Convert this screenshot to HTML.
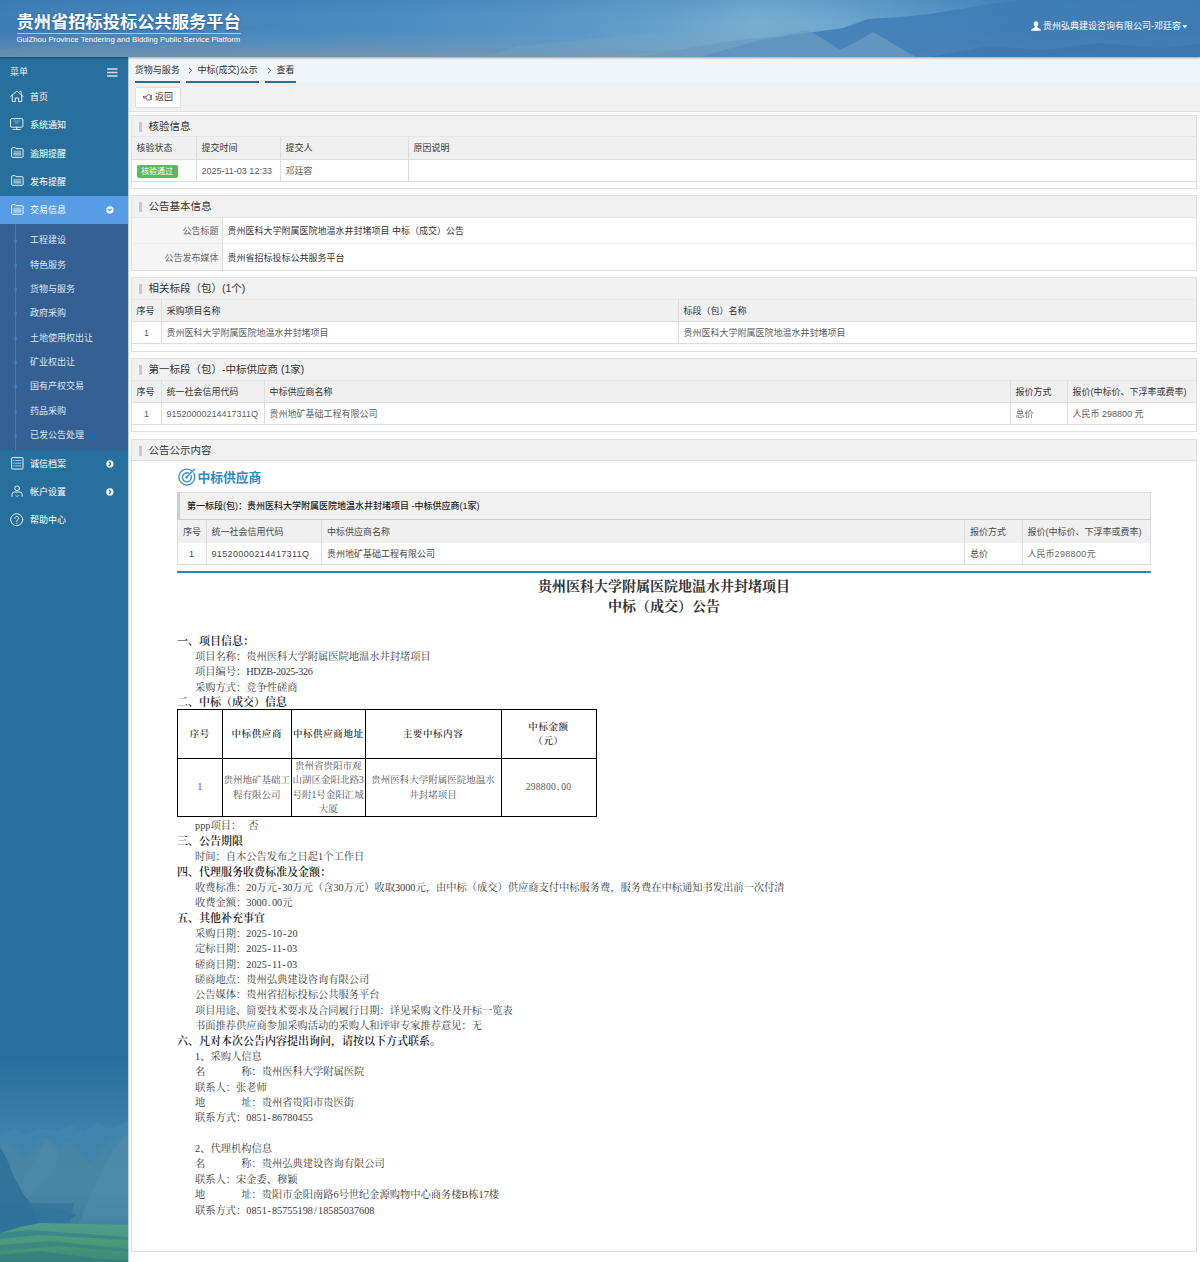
<!DOCTYPE html>
<html lang="zh-CN">
<head>
<meta charset="utf-8">
<title>贵州省招标投标公共服务平台</title>
<style>
*{box-sizing:border-box;margin:0;padding:0}
html,body{width:1200px;height:1262px;overflow:hidden}
body{position:relative;background:#f0f0f0;font-family:"Liberation Sans","Noto Sans CJK SC",sans-serif;font-size:9px;color:#333}
/* header */
#hd{position:absolute;left:0;top:0;width:1200px;height:57px;overflow:hidden;background:linear-gradient(90deg,#3d7fb8 0%,#4a8cc2 18%,#5a9fcd 40%,#5598c8 60%,#4484b8 80%,#3571a6 100%);box-shadow:0 1px 2px rgba(0,0,0,.35);z-index:5}
#hd>svg{position:absolute;left:0;top:0}
#logo{position:absolute;left:16.5px;top:11.200px;color:#fff;font-weight:bold;font-size:17.25px;line-height:22px;white-space:nowrap;text-shadow:0 1px 2px rgba(20,60,110,.55)}
#logoline{position:absolute;left:16.5px;top:33px;width:224px;height:1px;background:rgba(255,255,255,.55)}
#logoen{position:absolute;left:16.5px;top:34.800px;color:#fff;font-size:7.720px;line-height:10px;white-space:nowrap;letter-spacing:0.02px}
#user{position:absolute;left:1043px;top:19.5px;color:#fff;font-size:9px;line-height:12px;white-space:nowrap}
/* sidebar */
#sb{position:absolute;left:0;top:57px;width:128px;height:1205px;background:#27709d;overflow:hidden;color:#fff}
#sb .mh,#sb .it,#sb .sub{position:relative;z-index:1}
#sb .mh{height:26px;line-height:30px;padding-left:10px;font-size:9px;color:#e4eef5;position:relative}
#sb .it{height:28.25px;line-height:28.25px;padding-left:30px;position:relative;white-space:nowrap}
#sb .it.on{background:#569de6}
#sb .it svg.ic{position:absolute}
#sb .sub{background:#346094;padding:3.900px 0 2.400px 0;position:relative}
#sb .sub:before{content:"";position:absolute;left:14.6px;top:0;bottom:0;width:1px;background:#3f80c4}
#sb .si{height:24.375px;line-height:24.375px;padding-left:30px;color:#dbe6f2;white-space:nowrap;position:relative}
#sb .si:before{content:"";position:absolute;left:13.6px;top:11px;width:3px;height:3px;border-radius:50%;background:#3f80c4}
/* main */
#main{position:absolute;left:128px;top:57px;width:1072px;height:1205px;background:#fff;box-shadow:inset 1px 0 0 #b4cde2}
#bc{height:26px;background:#f0f5fa;position:relative}
#tb{height:29px;border-bottom:1px solid #e0e0e0;position:relative;background:#f1f1f1}
.panel{position:absolute;left:3px;width:1066px;border:1px solid #e0e0e0;background:#fff}
.ph{height:21px;line-height:21px;background:#f1f1f1;font-size:10.5px;color:#333;padding-left:16.500px;position:relative;white-space:nowrap}
.ph:before{content:"";position:absolute;left:7px;top:5.5px;width:3px;height:10px;background:#c8c8c8}
table{border-collapse:collapse;table-layout:fixed}

.bci{position:absolute;top:0;height:26px;line-height:27.5px;font-size:9px;color:#333;border-bottom:2px solid #27709d;text-align:center;white-space:nowrap}
.bcs{position:absolute;top:9.800px;height:7px;line-height:0;z-index:2}
#back{position:absolute;left:7px;top:4px;width:45.500px;height:21px;background:#fff;border:1px solid #ddd;border-radius:2px;line-height:19px;font-size:9px;color:#333;padding-left:19px;white-space:nowrap}
#back svg{position:absolute;left:6.500px;top:5.800px}
table.g{width:1064px;font-size:9px;border-collapse:separate;border-spacing:0}
table.g th{box-sizing:border-box;background:#f0f0f0;font-weight:normal;text-align:left;padding:0 0 1px 4.500px;border-top:1px solid #e6e6e6;border-bottom:1px solid #ddd;border-right:1px solid #ddd;color:#333;white-space:nowrap;overflow:hidden}
table.g td{box-sizing:border-box;background:#fff;padding:0 0 0 4.500px;border-bottom:1px solid #ddd;border-right:1px solid #ddd;color:#5c5c5c;white-space:nowrap;overflow:hidden}
table.g th:last-child,table.g td:last-child{border-right:none}
table.g .c{text-align:center;padding:0}
.badge{display:inline-block;width:41px;height:13px;line-height:13px;background:#5cb85c;color:#fff;font-size:7.9px;text-align:center;border-radius:2px;vertical-align:middle;position:relative;top:0.5px}
table.f{width:1064px;font-size:9px;border-collapse:separate;border-spacing:0}
table.f td{box-sizing:border-box;border-bottom:1px solid #eee;padding:0 0 0 5px;color:#333;background:#fff;white-space:nowrap}
table.f td.l{background:#f5f5f5;text-align:right;padding:0 3px 0 0;color:#666;border-right:1px solid #ddd}
table.f tr:first-child td{border-top:1px solid #e6e6e6}
table.f tr:last-child td{border-bottom:none}

#ann{position:absolute;left:45px;top:21px;width:974px;height:790px}
#zt{position:absolute;left:0;top:7.5px;height:18px;line-height:18px;padding-left:20.500px;font-size:12.750px;font-weight:bold;color:#2e8acb;white-space:nowrap}
#zt svg{position:absolute;left:0.500px;top:-0.500px}
#sbar{position:absolute;left:0;top:31px;width:974px;height:28px;background:#f1f1f1;border:1px solid #ddd;border-left:3px solid #ccc;border-bottom:1px solid #ccc;line-height:26px;padding-left:7px;font-size:9px;font-weight:500;color:#222;white-space:nowrap}
table.in{position:absolute;left:0;top:59px;width:974px;font-size:9px;border-collapse:separate;border-spacing:0;border-left:1px solid #ddd}
table.in th{box-sizing:border-box;height:23px;background:#f0f0f0;font-weight:normal;text-align:left;padding:0 0 0 5px;border-right:1px solid #ddd;color:#4a4a4a;white-space:nowrap}
table.in td{box-sizing:border-box;height:22px;background:#fff;padding:0 0 0 5px;border-right:1px solid #ddd;border-bottom:1px solid #ddd;color:#444;white-space:nowrap}
table.in .c{text-align:center;padding:0}
table.in .n{letter-spacing:0.36px}
#bl{position:absolute;left:0;top:110px;width:974px;height:2px;background:#2e86c1}
#doc{position:absolute;left:0;top:112px;width:974px;font-family:"Liberation Serif","Noto Serif CJK SC",serif;color:#3a3a3a;font-size:10.25px;line-height:15.375px}
#doc .tt{position:absolute;left:0;width:974px;text-align:center;font-size:14px;line-height:20px;font-weight:bold;color:#333;white-space:nowrap}
#doc .ln{position:absolute;left:18px;white-space:nowrap;height:15.375px;margin-top:0.900px}
#doc .hd{position:absolute;left:0;white-space:nowrap;height:15.375px;font-size:11px;font-weight:600;color:#222;margin-top:1.300px}
#doc .h{display:inline-block;width:5.125px;text-align:center;font-style:normal}
#doc .sp{display:inline-block}
table.bt{position:absolute;left:0;top:136px;border-collapse:collapse;table-layout:fixed;font-size:9.5px;line-height:14.4px;color:#555;text-align:center}
table.bt td{border:1px solid #000;padding:0;vertical-align:middle;overflow:hidden;white-space:nowrap}
table.bt tr:first-child td{font-weight:600;color:#333;letter-spacing:0.600px}
table.bt td div{height:56px;display:flex;align-items:center;justify-content:center;overflow:visible}
table.bt td div span{display:block}
</style>
</head>
<body>
<div id="hd">
<svg width="1200" height="57" viewBox="0 0 1200 57" preserveAspectRatio="none">
<defs>
<linearGradient id="hg" x1="0" x2="1" y1="0" y2="0">
<stop offset="0" stop-color="#3d7bb4"/><stop offset=".12" stop-color="#4282ba"/><stop offset=".3" stop-color="#4a8abf"/><stop offset=".45" stop-color="#5794c4"/><stop offset=".56" stop-color="#68a1cb"/><stop offset=".63" stop-color="#78aed2"/><stop offset=".69" stop-color="#70a8cf"/><stop offset=".76" stop-color="#5d98c6"/><stop offset=".85" stop-color="#4786bb"/><stop offset="1" stop-color="#3b76ad"/>
</linearGradient>
<linearGradient id="hv" x1="0" x2="0" y1="0" y2="1"><stop offset="0" stop-color="#2f6fae" stop-opacity=".22"/><stop offset=".5" stop-color="#6fa6cf" stop-opacity="0"/><stop offset=".78" stop-color="#7f9fb6" stop-opacity=".3"/><stop offset="1" stop-color="#86a3b6" stop-opacity=".5"/></linearGradient>
</defs>
<rect width="1200" height="57" fill="url(#hg)"/>
<rect width="1200" height="57" fill="url(#hv)"/>
<path d="M0,50 L30,46 60,48 100,44 140,47 190,43 240,47 300,49 360,46 420,50 470,47 520,50 580,48 640,51 700,49 720,57 0,57Z" fill="#6f90a8" opacity=".4"/>
<path d="M480,57 L520,46 580,40 640,34 700,30 740,27 780,22 800,26 860,57Z" fill="#78a8cb" opacity=".3"/>
<path d="M700,57 L760,40 800,34 843,28 868,19 900,17 930,14 960,9 990,4 1025,0 1200,0 1200,57Z" fill="#3f7cb4" opacity=".8"/>
<path d="M640,57 L700,46 740,40 780,36 806,30 822,38 840,50 856,42 873,32 890,42 916,57Z" fill="#6a9bc3" opacity=".75"/>
<path d="M930,57 L990,46 1040,50 1100,43 1160,48 1200,44 1200,57Z" fill="#356fa6" opacity=".45"/>
</svg>
<div id="logo">贵州省招标投标公共服务平台</div>
<div id="logoline"></div>
<div id="logoen">GuiZhou Province Tendering and Bidding Public Service Platform</div>
<div id="user"><svg width="10" height="10" viewBox="0 0 10 10" style="position:absolute;left:-12px;top:1px"><path d="M5,0.2c1.5,0,2.3,1.1,2.3,2.6c0,1.2-.6,2.3-1.2,2.8c0,.6.2.9,1.4,1.3c1.500,.5,2.300,.9,2.300,2.900H.2c0-2,.8-2.400,2.300-2.900c1.200-.4,1.400-.7,1.400-1.300c-.6-.5-1.200-1.600-1.200-2.800c0-1.500,.8-2.600,2.300-2.600z" fill="#fff"/></svg>贵州弘典建设咨询有限公司-邓廷容<svg width="6" height="4" viewBox="0 0 6 4" style="position:absolute;left:139px;top:5px"><path d="M0.3,0.3H5.300L2.800,3.200z" fill="#fff"/></svg></div>
</div>
<div id="sb">
<svg width="128" height="205" viewBox="0 0 128 205" style="position:absolute;left:0;top:1000px">
<defs>
<linearGradient id="sk" x1="0" x2="0" y1="0" y2="1"><stop offset="0" stop-color="#27709d"/><stop offset=".35" stop-color="#3a80ab"/><stop offset="1" stop-color="#3a80ab"/></linearGradient>
<linearGradient id="mt" x1="0" x2="0" y1="0" y2="1"><stop offset="0" stop-color="#4686a9"/><stop offset=".6" stop-color="#4a86a6"/><stop offset="1" stop-color="#3c7c9e"/></linearGradient>
<linearGradient id="gr" x1="0" x2="0" y1="0" y2="1"><stop offset="0" stop-color="#4f9c8c"/><stop offset=".5" stop-color="#4c9a78"/><stop offset="1" stop-color="#3b8a74"/></linearGradient>
</defs>
<rect width="128" height="205" fill="url(#sk)"/>
<path d="M0,80 L14,72 26,77 40,71 56,74 70,68 84,75 96,66 110,72 128,64 128,120 0,120Z" fill="#4186ae" opacity=".7"/>
<path d="M0,88 L11,86.500 18,92 24,100 32,92 40,83 46,81 52,84 60,92 64,86 67.500,84 72,88 80,97 90,106 96,100 104,90 114,82 123,78.500 128,79 128,175 0,175Z" fill="url(#mt)"/>
<path d="M46,81 L60,98 52,118 30,140 20,128 34,104Z" fill="#4f8baa" opacity=".5"/>
<path d="M123,78.500 L128,79 128,168 78,168 90,140 104,108Z" fill="#5590ad" opacity=".45"/>
<path d="M0,90 L6,100 14,120 24,138 34,150 60,152 76,158 60,170 0,176Z" fill="#2f7099" opacity=".85"/>
<path d="M30,146 L74,146 70,166 40,168Z" fill="#34769c" opacity=".8"/>
<path d="M0,176 L20,170 40,166 128,168 128,205 0,205Z" fill="url(#gr)"/>
<path d="M0,176 L30,173 128,180 128,183 40,178 0,182Z" fill="#2f7a92" opacity=".55"/>
<path d="M0,188 L50,184 128,192 128,195 60,189 0,194Z" fill="#2f7a8c" opacity=".5"/>
<path d="M0,198 L40,194 100,202 128,203 128,205 0,205Z" fill="#2c7488" opacity=".5"/>
</svg>
<div class="mh">菜单<svg width="11" height="9" viewBox="0 0 11 9" style="position:absolute;left:107.300px;top:10.700px"><path d="M0,0.900H10.500M0,4.400H10.500M0,7.900H10.500" stroke="#cfe0ec" stroke-width="1.500" fill="none"/></svg></div>
<div class="it"><svg class="ic" width="14" height="13" viewBox="0 0 14 13" style="left:10px;top:7px"><g fill="none" stroke="#fff" stroke-opacity=".88" stroke-width="1" stroke-linecap="round" stroke-linejoin="round"><path d="M0.700,6.400L6.900,1L13.200,6.400"/><path d="M2.300,5.200V11.600H5.300V8H8.600V11.600H11.700V5.200"/><path d="M9.700,1.500H11.300V4.400" stroke-opacity=".6"/></g></svg>首页</div>
<div class="it"><svg class="ic" width="14" height="13" viewBox="0 0 14 13" style="left:10px;top:6.500px"><g fill="none" stroke="#fff" stroke-opacity=".88" stroke-width="1" stroke-linecap="round" stroke-linejoin="round"><rect x="0.500" y="0.600" width="12.400" height="8.600" rx="1.100"/><path d="M6.700,9.300V11.200"/><path d="M2.900,11.500H10.500" stroke-opacity=".7"/><path d="M3.600,3H9.800" stroke-opacity=".4"/><path d="M5.200,4.900H8.200" stroke-opacity=".4"/></g></svg>系统通知</div>
<div class="it"><svg class="ic" width="14" height="12" viewBox="0 0 14 12" style="left:10.500px;top:7.500px"><g fill="none" stroke="#fff" stroke-opacity=".88" stroke-width="1" stroke-linecap="round" stroke-linejoin="round"><path d="M0.600,1.500a.8.8 0 0 1 .8-.8H4.300L5.100,1.700H11.300a.8.8 0 0 1 .8.800V9.500a.8.8 0 0 1-.8.800H1.400a.8.8 0 0 1-.8-.8Z"/><path d="M2.800,4.300H9.900" stroke-opacity=".55"/><path d="M2.800,6.100H9.900"/><path d="M2.800,7.900H9.900" stroke-opacity=".8"/></g></svg>逾期提醒</div>
<div class="it"><svg class="ic" width="14" height="12" viewBox="0 0 14 12" style="left:10.500px;top:7.500px"><g fill="none" stroke="#fff" stroke-opacity=".88" stroke-width="1" stroke-linecap="round" stroke-linejoin="round"><path d="M0.600,1.500a.8.8 0 0 1 .8-.8H4.300L5.100,1.700H11.300a.8.8 0 0 1 .8.800V9.500a.8.8 0 0 1-.8.800H1.400a.8.8 0 0 1-.8-.8Z"/><path d="M2.800,4.300H9.900" stroke-opacity=".55"/><path d="M2.800,6.100H9.900"/><path d="M2.800,7.900H9.900" stroke-opacity=".8"/></g></svg>发布提醒</div>
<div class="it on"><svg class="ic" width="14" height="12" viewBox="0 0 14 12" style="left:10.500px;top:7.500px"><g fill="none" stroke="#fff" stroke-opacity=".88" stroke-width="1" stroke-linecap="round" stroke-linejoin="round"><path d="M0.600,1.500a.8.8 0 0 1 .8-.8H4.300L5.100,1.700H11.300a.8.8 0 0 1 .8.800V9.500a.8.8 0 0 1-.8.800H1.400a.8.8 0 0 1-.8-.8Z"/><path d="M2.800,4.300H9.900" stroke-opacity=".55"/><path d="M2.800,6.100H9.900"/><path d="M2.800,7.900H9.900" stroke-opacity=".8"/></g></svg>交易信息<svg width="8" height="8" viewBox="0 0 8 8" style="position:absolute;left:105.600px;top:10.300px"><circle cx="3.900" cy="3.900" r="3.600" fill="#fff"/><path d="M2.300,3.200L3.900,4.800L5.500,3.200" fill="none" stroke="#569de6" stroke-width="1.300" stroke-linecap="round" stroke-linejoin="round"/></svg></div>
<div class="sub">
<div class="si">工程建设</div>
<div class="si">特色服务</div>
<div class="si">货物与服务</div>
<div class="si">政府采购</div>
<div class="si">土地使用权出让</div>
<div class="si">矿业权出让</div>
<div class="si">国有产权交易</div>
<div class="si">药品采购</div>
<div class="si">已发公告处理</div>
</div>
<div class="it"><svg class="ic" width="14" height="13" viewBox="0 0 14 13" style="left:10.500px;top:7px"><g fill="none" stroke="#fff" stroke-opacity=".88" stroke-width="1" stroke-linecap="round" stroke-linejoin="round"><rect x="0.600" y="0.600" width="11.400" height="11.400" rx=".6"/><path d="M4.200,3.500H10" stroke-opacity=".6"/><path d="M4.200,6.200H10" stroke-opacity=".6"/><path d="M4.200,8.900H10" stroke-opacity=".6"/><path d="M2.300,3.500H2.900M2.300,6.200H2.900M2.300,8.900H2.900" stroke-opacity=".6"/></g></svg>诚信档案<svg width="8" height="8" viewBox="0 0 8 8" style="position:absolute;left:105.600px;top:10.300px"><circle cx="3.900" cy="3.900" r="3.600" fill="#fff"/><path d="M3.300,2.300L4.900,3.900L3.300,5.500" fill="none" stroke="#27709d" stroke-width="1.300" stroke-linecap="round" stroke-linejoin="round"/></svg></div>
<div class="it"><svg class="ic" width="14" height="13" viewBox="0 0 14 13" style="left:10.500px;top:7px"><g fill="none" stroke="#fff" stroke-opacity=".88" stroke-width="1" stroke-linecap="round" stroke-linejoin="round"><circle cx="6.100" cy="3.300" r="2.400"/><path d="M1,11.400V9.600a2.600,2.600 0 0 1 2.600-2.600H8.600a2.600,2.600 0 0 1 2.600,2.600V11.400"/><path d="M5,10.600L6,11.600L7.400,10.200" stroke-opacity=".7"/></g></svg>帐户设置<svg width="8" height="8" viewBox="0 0 8 8" style="position:absolute;left:105.600px;top:10.300px"><circle cx="3.900" cy="3.900" r="3.600" fill="#fff"/><path d="M3.300,2.300L4.900,3.900L3.300,5.500" fill="none" stroke="#27709d" stroke-width="1.300" stroke-linecap="round" stroke-linejoin="round"/></svg></div>
<div class="it"><svg class="ic" width="14" height="14" viewBox="0 0 14 14" style="left:9.800px;top:6.500px"><g fill="none" stroke="#fff" stroke-opacity=".88" stroke-width="1" stroke-linecap="round" stroke-linejoin="round"><circle cx="6.700" cy="6.700" r="6"/><path d="M4.900,5.300a1.850,1.850 0 1 1 2.900,1.500c-.7.500-1,.8-1,1.700"/><path d="M6.800,10.300V10.500"/></g></svg>帮助中心</div>
</div>
<div id="main"><div style="position:absolute;left:0;top:0;width:1px;height:1205px;background:#b9d0e4;z-index:3"></div>
<div id="bc">
<div class="bci" style="left:6.5px;width:45.5px">货物与服务</div><div class="bcs" style="left:60.300px"><svg width="5" height="7" viewBox="0 0 5 7"><path d="M1,0.800L3.800,3.500L1,6.200" fill="none" stroke="#555" stroke-width=".9"/></svg></div>
<div class="bci" style="left:57.5px;width:73px;padding-left:11px">中标(成交)公示</div><div class="bcs" style="left:139px"><svg width="5" height="7" viewBox="0 0 5 7"><path d="M1,0.800L3.800,3.500L1,6.200" fill="none" stroke="#555" stroke-width=".9"/></svg></div>
<div class="bci" style="left:136.5px;width:31px;padding-left:11px">查看</div>
</div>
<div id="tb"><div id="back"><svg width="9.600" height="7" viewBox="0 0 11 8"><g fill="none" stroke="#444" stroke-width=".9" stroke-linejoin="round" stroke-linecap="round"><path d="M0.500,3.100H4.200L5.300,1.200C5.700,.7,6.300,.7,7,.9H7.800C8.500,.9,8.800,1.400,8.800,2V5.500C8.800,6.300,8.300,6.900,7.600,6.900H5.200C4.500,6.900,4.200,6.500,3.900,5.900L3.600,4.400H0.500C-.1,4.400,-.1,3.100,.5,3.100Z"/><path d="M10.200,1.300V6.600" stroke-width="1.200"/></g></svg>返回</div></div>

<div class="panel" style="top:58px;height:74px">
<div class="ph" style="height:20px;line-height:20px">核验信息</div>
<table class="g"><colgroup><col style="width:65px"><col style="width:84px"><col style="width:128px"><col></colgroup>
<tr style="height:24px"><th>核验状态</th><th>提交时间</th><th>提交人</th><th>原因说明</th></tr>
<tr style="height:22px"><td><span class="badge">核验通过</span></td><td>2025-11-03 12:33</td><td>邓廷容</td><td></td></tr>
</table>
</div>

<div class="panel" style="top:138px;height:76px">
<div class="ph" style="height:21px;line-height:21px">公告基本信息</div>
<table class="f"><colgroup><col style="width:90.5px"><col></colgroup>
<tr style="height:27px"><td class="l">公告标题</td><td>贵州医科大学附属医院地温水井封堵项目 中标（成交）公告</td></tr>
<tr style="height:26px"><td class="l">公告发布媒体</td><td>贵州省招标投标公共服务平台</td></tr>
</table>
</div>

<div class="panel" style="top:220px;height:75px">
<div class="ph" style="height:21px;line-height:21px">相关标段（包）(1个)</div>
<table class="g"><colgroup><col style="width:30px"><col style="width:517px"><col></colgroup>
<tr style="height:23px"><th>序号</th><th>采购项目名称</th><th>标段（包）名称</th></tr>
<tr style="height:22px"><td class="c">1</td><td>贵州医科大学附属医院地温水井封堵项目</td><td>贵州医科大学附属医院地温水井封堵项目</td></tr>
</table>
</div>

<div class="panel" style="top:301px;height:74px">
<div class="ph" style="height:21px;line-height:21px">第一标段（包）-中标供应商 (1家)</div>
<table class="g"><colgroup><col style="width:30px"><col style="width:103px"><col style="width:746px"><col style="width:57px"><col></colgroup>
<tr style="height:23px"><th>序号</th><th>统一社会信用代码</th><th>中标供应商名称</th><th>报价方式</th><th>报价(中标价、下浮率或费率)</th></tr>
<tr style="height:22px"><td class="c">1</td><td>91520000214417311Q</td><td>贵州地矿基础工程有限公司</td><td>总价</td><td>人民币 298800 元</td></tr>
</table>
</div>

<div class="panel" id="p5" style="top:382px;height:813px">
<div class="ph" style="height:21px;line-height:20px;border-bottom:1px solid #ddd">公告公示内容</div>
<div id="ann">
<div id="zt"><svg width="18" height="18" viewBox="0 0 18 18"><g fill="none" stroke="#3a92cc" stroke-width="1.350" stroke-linecap="round"><path d="M13.500,2.700A7.900,7.900 0 1 0 15.600,5"/><path d="M10.900,5.300A4.500,4.500 0 1 0 13,7.500"/><path d="M8.700,9.300L16.300,1.300"/></g><circle cx="8.700" cy="9.300" r="1.300" fill="#3a92cc"/></svg>中标供应商</div>
<div id="sbar">第一标段(包)：贵州医科大学附属医院地温水井封堵项目 -中标供应商(1家)</div>
<table class="in"><colgroup><col style="width:28.5px"><col style="width:115.5px"><col style="width:643px"><col style="width:57.5px"><col></colgroup>
<tr><th>序号</th><th>统一社会信用代码</th><th>中标供应商名称</th><th>报价方式</th><th>报价(中标价、下浮率或费率)</th></tr>
<tr><td class="c n">1</td><td class="n">91520000214417311Q</td><td>贵州地矿基础工程有限公司</td><td>总价</td><td style="color:#666">人民币<span class="n">298800</span>元</td></tr>
</table>
<div id="bl"></div>
<div id="doc">
<div class="tt" style="top:3.5px">贵州医科大学附属医院地温水井封堵项目</div>
<div class="tt" style="top:23.5px">中标（成交）公告</div>
<div class="hd" style="top:59.81px">一、项目信息：</div>
<div class="ln" style="top:75.11px">项目名称：贵州医科大学附属医院地温水井封堵项目</div>
<div class="ln" style="top:90.51px">项目编号：<span style="letter-spacing:-0.33px">HDZB-2025-326</span></div>
<div class="ln" style="top:105.91px">采购方式：竞争性磋商</div>
<div class="hd" style="top:120.81px">二、中标（成交）信息</div>
<div class="ln" style="top:244.31px">ppp项目：<span class="sp" style="width:7px"></span>否</div>
<div class="hd" style="top:259.31px">三、公告期限</div>
<div class="ln" style="top:275.01px">时间：自本公告发布之日起1个工作日</div>
<div class="hd" style="top:290.31px">四、代理服务收费标准及金额：</div>
<div class="ln" style="top:305.81px">收费标准：20万元<span class="h">-</span>30万元（含30万元）收取3000元，由中标（成交）供应商支付中标服务费，服务费在中标通知书发出前一次付清</div>
<div class="ln" style="top:321.11px">收费金额：3000<span class="h">.</span>00元</div>
<div class="hd" style="top:336.31px">五、其他补充事宜</div>
<div class="ln" style="top:351.91px">采购日期：2025<span class="h">-</span>10<span class="h">-</span>20</div>
<div class="ln" style="top:367.31px">定标日期：2025<span class="h">-</span>11<span class="h">-</span>03</div>
<div class="ln" style="top:382.61px">磋商日期：2025<span class="h">-</span>11<span class="h">-</span>03</div>
<div class="ln" style="top:398.01px">磋商地点：贵州弘典建设咨询有限公司</div>
<div class="ln" style="top:413.41px">公告媒体：贵州省招标投标公共服务平台</div>
<div class="ln" style="top:428.81px">项目用途、简要技术要求及合同履行日期：详见采购文件及开标一览表</div>
<div class="ln" style="top:444.11px">书面推荐供应商参加采购活动的采购人和评审专家推荐意见：无</div>
<div class="hd" style="top:459.31px">六、凡对本次公告内容提出询问，请按以下方式联系。</div>
<div class="ln" style="top:474.91px">1、采购人信息</div>
<div class="ln" style="top:490.31px">名<span class="sp" style="width:35.9px"></span>称：贵州医科大学附属医院</div>
<div class="ln" style="top:505.61px">联系人：张老师</div>
<div class="ln" style="top:521.01px">地<span class="sp" style="width:35.9px"></span>址：贵州省贵阳市贵医街</div>
<div class="ln" style="top:536.41px">联系方式：0851<span class="h">-</span>86780455</div>
<div class="ln" style="top:567.11px">2、代理机构信息</div>
<div class="ln" style="top:582.51px">名<span class="sp" style="width:35.9px"></span>称：贵州弘典建设咨询有限公司</div>
<div class="ln" style="top:597.91px">联系人：宋金委、穆颖</div>
<div class="ln" style="top:613.31px">地<span class="sp" style="width:35.9px"></span>址：贵阳市金阳南路6号世纪金源购物中心商务楼B栋17楼</div>
<div class="ln" style="top:628.61px">联系方式：0851<span class="h">-</span>85755198<span class="h">/</span>18585037608</div>
<table class="bt"><colgroup><col style="width:44.5px"><col style="width:69.5px"><col style="width:73.5px"><col style="width:136px"><col style="width:95px"></colgroup>
<tr style="height:49px"><td>序号</td><td>中标供应商</td><td>中标供应商地址</td><td>主要中标内容</td><td>中标金额<br>（元）</td></tr>
<tr style="height:58px"><td><div><span>1</span></div></td><td><div><span>贵州地矿基础工<br>程有限公司</span></div></td><td><div><span>贵州省贵阳市观<br>山湖区金阳北路3<br>号附1号金阳汇城<br>大厦</span></div></td><td><div><span>贵州医科大学附属医院地温水<br>井封堵项目</span></div></td><td><div><span style="letter-spacing:0.300px">298800<i class="h">.</i>00</span></div></td></tr>
</table>
</div>
</div>
</div>
</div>
</body>
</html>
